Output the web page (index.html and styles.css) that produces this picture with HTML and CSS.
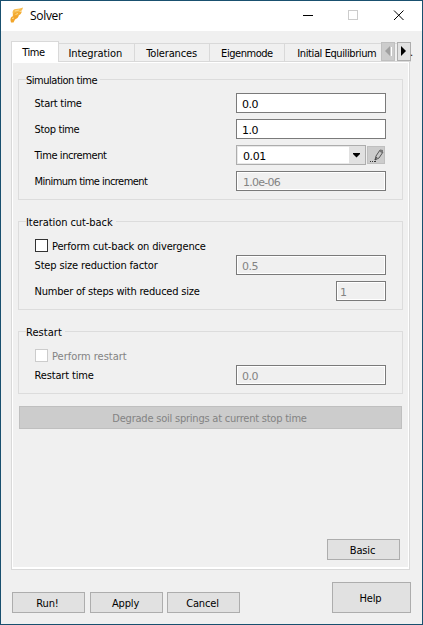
FILE: index.html
```html
<!DOCTYPE html>
<html lang="en">
<head>
<meta charset="utf-8">
<title>Solver</title>
<link rel="stylesheet" href="styles.css">
</head>
<body>
<div class="window">
  <header class="titlebar">
    <svg class="logo" width="14" height="16" viewBox="0 0 14 16"><path d="M2.500 6Q2.500 2 6 2Q10 1.500 13 .5Q12.500 4 9 5L3 7Z" fill="#f7bd4f"/><path d="M3 9.500Q2 6 5 5.500Q9 4.500 12 4.500Q11 8 8 9L4 10.500Z" fill="#f4ad33"/><path d="M1 15.500Q-.5 11 2 9.500Q6 8 9 8.500Q8 11.500 5 12.500L3.500 15.500Z" fill="#f2a52a"/><path d="M5 4L9 3M5.500 7.500L8 6.500M2 11.500L4 11" stroke="#fbd990" fill="none"/></svg>
    <span class="title">Solver</span>
    <svg class="controls" width="103" height="12" viewBox="0 0 103 12" fill="none" shape-rendering="crispEdges"><path d="M1 5.500H11" stroke="#000"/><rect x="46.500" y=".5" width="9" height="9" stroke="#ccc"/><path d="M92 .5L101.500 10M101.500 .5L92 10" stroke="#000" shape-rendering="auto"/></svg>
  </header>
  <main class="body">
    <nav class="tabs">
      <div class="tab tab-active">Time</div>
      <div class="tab tab-integration">Integration</div>
      <div class="tab tab-tolerances">Tolerances</div>
      <div class="tab tab-eigen">Eigenmode</div>
      <div class="tab tab-initial">Initial Equilibrium</div>
      <div class="scroll scroll-off"><svg width="12" height="17" viewBox="0 0 12 17"><path d="M9.500 4V13" stroke="#fff"/><path d="M8 3V13L3 8Z" fill="#a0a0a0"/></svg></div>
      <div class="scroll scroll-on"><svg width="12" height="17" viewBox="0 0 12 17"><path d="M3 3V13L8 8Z" fill="#000"/></svg></div>
      <span class="more">.</span>
    </nav>
    <section class="panel">
      <div class="group group-sim">
        <div class="legend"><span class="l-sim">Simulation time</span></div>
        <div class="row"><label class="l-start">Start time</label><div class="field">0.0</div></div>
        <div class="row"><label class="l-stop">Stop time</label><div class="field">1.0</div></div>
        <div class="row"><label class="l-inc">Time increment</label>
          <div class="combo"><span class="combo-value">0.01</span><span class="combo-arrow"><svg width="9" height="5" viewBox="0 0 9 5"><path d="M1 0H8V1L4.500 4.500L1 1Z"/></svg></span></div>
          <div class="edit"><svg width="16" height="16" viewBox="0 0 16 16"><path d="M2 14.500H3M4 14.500H5M6 14.500H8" stroke="#333"/><path d="M7 13L8 9L12 3L15 5L11 11Z" fill="#c8c8c8" stroke="#555"/><path d="M11 4L12.500 2.500L15 3L15 5L13.500 6Z" fill="#777"/><path d="M7 13L9 10" stroke="#444"/></svg></div>
        </div>
        <div class="row"><label class="l-min">Minimum time increment</label><div class="field disabled indent">1.0e-06</div></div>
      </div>
      <div class="group group-iter">
        <div class="legend"><span class="l-iter">Iteration cut-back</span></div>
        <div class="check"><i class="box"></i><span class="l-div">Perform cut-back on divergence</span></div>
        <div class="row"><label class="l-step">Step size reduction factor</label><div class="field disabled">0.5</div></div>
        <div class="row"><label class="l-num">Number of steps with reduced size</label><div class="field disabled short">1</div></div>
      </div>
      <div class="group group-restart">
        <div class="legend"><span class="l-restart">Restart</span></div>
        <div class="check check-off"><i class="box"></i><span class="l-perform">Perform restart</span></div>
        <div class="row"><label class="l-rtime">Restart time</label><div class="field disabled">0.0</div></div>
      </div>
      <div class="button degrade"><span class="l-degrade">Degrade soil springs at current stop time</span></div>
      <div class="button basic"><span>Basic</span></div>
    </section>
    <footer class="footer">
      <div class="button run"><span>Run!</span></div>
      <div class="button apply"><span>Apply</span></div>
      <div class="button cancel"><span>Cancel</span></div>
      <div class="button help"><span>Help</span></div>
    </footer>
  </main>
</div>
</body>
</html>
```
FILE: styles.css
```css
* { box-sizing: border-box; }
body { margin: 0; font: 11px/14px "DejaVu Sans Condensed", "DejaVu Sans", sans-serif; font-stretch: condensed; letter-spacing: -0.35px; color: #000; white-space: nowrap; }
svg { display: block; }
.window { width: 423px; height: 625px; border: 1px solid #19506f; background: #f0f0f0; display: flex; flex-direction: column; }
.titlebar { height: 30px; background: #fff; display: flex; align-items: flex-start; padding: 6px 17px 0 9px; }
.title { font: 12px/18px "Open Sans", sans-serif; letter-spacing: -.3px; margin-left: 6px; }
.controls { margin: 3px 0 0 auto; }
.body { flex: 1; padding: 10px 11px 11px 10px; display: flex; flex-direction: column; }
.tabs { height: 21px; display: flex; align-items: flex-end; position: relative; }
.tab { height: 19px; border: 1px solid #d9d9d9; border-left: 0; display: flex; align-items: center; justify-content: center; padding-top: 2px; }
.tab-active { width: 48px; height: 21px; background: #fff; border: 1px solid #d9d9d9; border-bottom: 0; padding-right: 3px; letter-spacing: -.45px; }
.tab-integration { width: 76px; letter-spacing: -.08px; padding-right: 2px; }
.tab-tolerances { width: 75px; letter-spacing: -.15px; }
.tab-eigen { width: 76px; letter-spacing: -.45px; }
.tab-initial { width: 126px; border-right: 0; justify-content: flex-start; padding-left: 12px; letter-spacing: -.4px; }
.scroll { position: absolute; top: 1px; width: 14px; height: 19px; border: 1px solid #bfbfbf; background: #ccc; }
.scroll-off { left: 370px; }
.scroll-on { left: 386px; background: #e1e1e1; border-color: #adadad; }
.more { position: absolute; left: 399px; top: 5px; }
.panel { width: 399px; height: 508px; border: 1px solid #d9d9d9; border-top: 0; box-shadow: inset 1px 1px #fff, inset -1px -2px #fff; padding: 17px 6px 9px; display: flex; flex-direction: column; }
.group { width: 385px; border: 1px solid #dcdcdc; padding: 0 16px 0 15px; margin-bottom: 21px; }
.group-sim { height: 121px; }
.group-iter { height: 89px; }
.group-restart { height: 63px; margin-bottom: 12px; }
.legend { height: 13px; margin-top: -7px; margin-left: -8px; }
.legend span { display: inline-block; background: #f0f0f0; padding-right: 3px; padding-top: 1px; }
.group-sim .legend { margin-bottom: 7px; }
.row { height: 20px; margin-bottom: 6px; display: flex; align-items: center; }
.row label { width: 202px; padding: 2px 0 0 .5px; }
.field { width: 150px; height: 20px; border: 1px solid #7a7a7a; background: #fff; padding: 4px 5px 0; font: 11px/14px "DejaVu Sans", sans-serif; letter-spacing: -.5px; }
.disabled { background: #f0f0f0; color: #838383; box-shadow: inset 0 0 0 1px #fff; }
.indent { padding-left: 6px; letter-spacing: -.75px; }
.short { width: 50px; margin-left: auto; padding-left: 3px; }
.combo { width: 130px; height: 20px; border: 1px solid #adadad; background: #fff; display: flex; box-shadow: inset 0 0 0 1px #e8e8e8; }
.combo-value { flex: 1; padding: 4px 0 0 6px; font: 11px/14px "DejaVu Sans", sans-serif; letter-spacing: -.4px; }
.combo-arrow { width: 16px; background: #e1e1e1; padding: 7px 0 0 3px; }
.edit { width: 18px; height: 18px; border: 1px solid #bfbfbf; background: #ccc; margin-left: 1px; }
.check { display: flex; height: 13px; margin-top: 11px; margin-bottom: 3px; align-items: center; margin-left: 1px; }
.check span { padding-top: 2px; }
.box { width: 13px; height: 13px; border: 1px solid #333; background: #fff; margin-right: 4px; }
.check-off { color: #838383; }
.check-off .box { border-color: #ccc; }
.button { width: 73px; height: 21px; border: 1px solid #adadad; background: #e1e1e1; display: flex; align-items: center; justify-content: center; padding: 2px 2px 0 0; letter-spacing: -.15px; }
.degrade { width: 383px; height: 23px; margin-left: 1px; background: #ccc; border-color: #bfbfbf; color: #838383; }
.basic { margin: auto 3px 0 auto; }
.footer { display: flex; align-items: flex-end; margin: auto 0 0 1px; }
.apply { margin-left: 5px; }
.cancel { margin-left: 4px; }
.help { width: 79px; height: 31px; margin-left: auto; }
.l-sim { letter-spacing: -.48px; }
.l-start { letter-spacing: -.25px; }
.l-inc { letter-spacing: -.4px; }
.l-min { letter-spacing: -.54px; }
.l-iter { letter-spacing: -.07px; }
.l-div { letter-spacing: -.15px; }
.l-step { letter-spacing: -.15px; }
.l-num { letter-spacing: -.21px; }
.l-restart { letter-spacing: .05px; }
.l-perform { letter-spacing: -.02px; }
.l-rtime { letter-spacing: -.15px; }
.l-degrade { letter-spacing: -.22px; }
```
